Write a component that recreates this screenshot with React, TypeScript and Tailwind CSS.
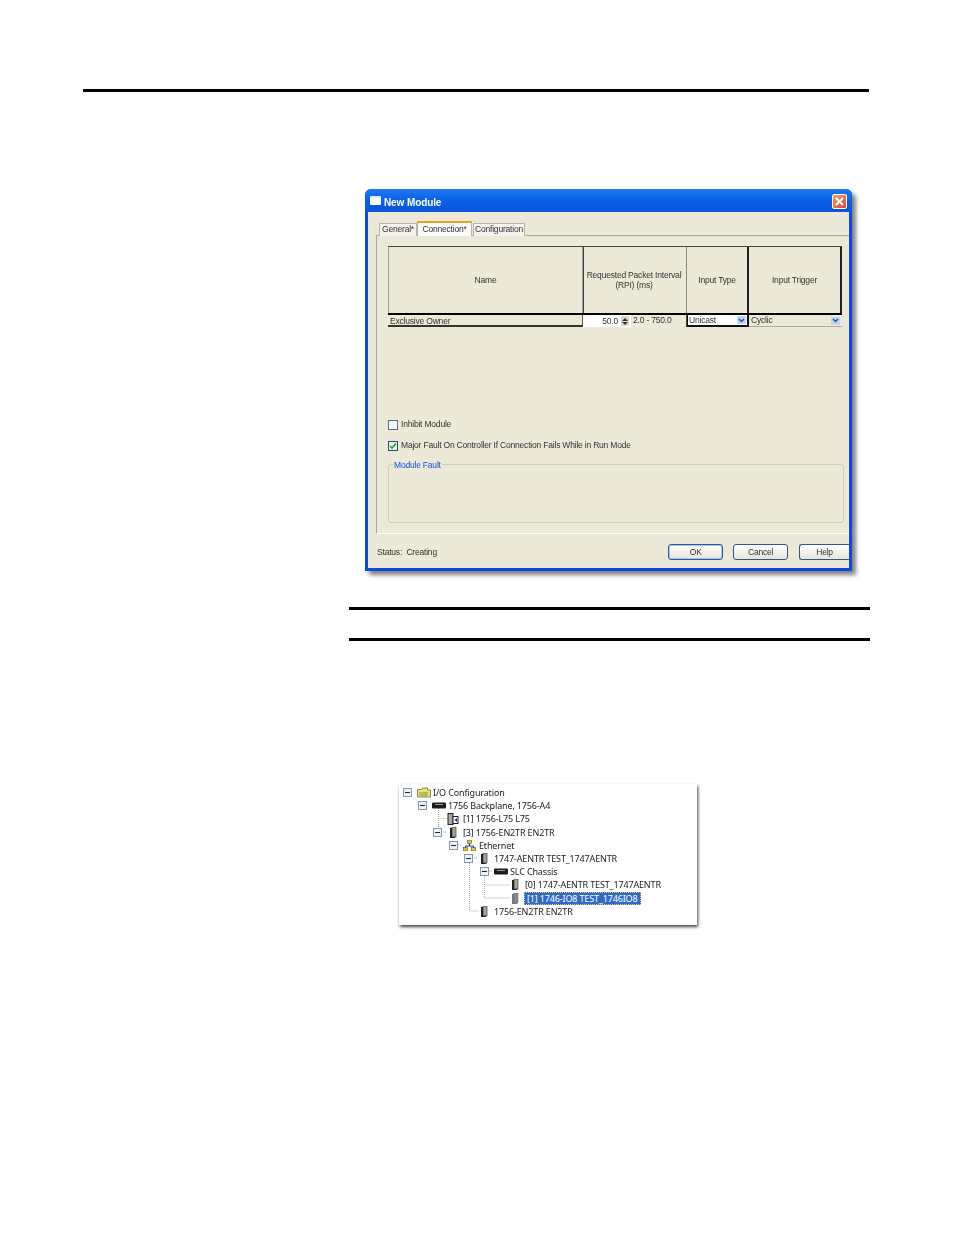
import React from "react";

const uiFont = "font-['Liberation_Sans',Arial,sans-serif]";

function Rule({ className }: { className: string }) {
    return <div className={`bg-black ${className}`} />;
}

function TitleBar() {
    return (
        <div className="h-[23px] flex items-center rounded-t-[6px] bg-gradient-to-b from-[#1f7bf0] via-[#0a5fe8] to-[#0a55dc] pl-[5px] pr-[5px]">
            <div className="w-[11px] h-[9px] bg-white rounded-[1px] border-t-2 border-[#dfe8fa]" />
            <span className="ml-[3px] mt-[3px] text-[10px] font-bold text-white tracking-[-0.1px]">New Module</span>
            <button className="ml-auto mt-[1px] w-[15px] h-[15px] rounded-[2px] bg-gradient-to-br from-[#f0a080] to-[#d84a20] border border-white flex items-center justify-center">
                <svg width="9" height="9" viewBox="0 0 9 9">
                    <path d="M1 1l7 7M8 1L1 8" stroke="#fff" strokeWidth="1.8" />
                </svg>
            </button>
        </div>
    );
}

function Tabs() {
    return (
        <div className="flex items-end h-[16px] pl-[3px] relative z-10 -mb-px text-[8.5px] tracking-[-0.2px] text-[#333]">
            <div className="h-[13px] w-[38px] pb-[1px] flex items-center justify-center bg-[#f4f3ec] border border-b-0 border-[#b5b5aa]">General*</div>
            <div className="h-[15px] w-[55px] pb-[1px] flex items-center justify-center bg-[#fbfbf9] border-x border-[#b5b5aa] border-t-2 border-t-[#e8a020]">Connection*</div>
            <div className="ml-[1px] h-[13px] w-[52px] pb-[1px] flex items-center justify-center bg-[#f4f3ec] border border-b-0 border-[#b5b5aa]">Configuration</div>
        </div>
    );
}

function ComboArrow() {
    return (
        <span className="ml-auto w-[9px] h-[8px] bg-[#c3d3f5] flex items-center justify-center">
            <svg width="7" height="5" viewBox="0 0 7 5">
                <path d="M1 1l2.500 2.500L6 1" fill="none" stroke="#2a4fa8" strokeWidth="1.500" />
            </svg>
        </span>
    );
}

function ConnectionTable() {
    return (
        <div className="w-[454px] ml-[11px] mt-[10px] text-[8.5px] tracking-[-0.2px] text-[#333]">
            <div className="flex h-[69px] border-t border-[#444] border-b-2 border-b-black text-center">
                <div className="w-[195px] border-x border-[#999] flex items-center justify-center">Name</div>
                <div className="w-[104px] border-l border-[#444] border-r border-r-[#888] flex items-center justify-center leading-[10.500px] pr-[2px]">
                    <span>Requested Packet Interval<br />(RPI) (ms)</span>
                </div>
                <div className="w-[62px] border-r-2 border-[#222] flex items-center justify-center">Input Type</div>
                <div className="w-[93px] border-r-2 border-[#222] flex items-center justify-center">Input Trigger</div>
            </div>
            <div className="flex h-[12px] items-stretch leading-[11px]">
                <div className="w-[195px] border-b-2 border-[#333] border-r border-r-[#555] pl-[2px] pt-px">Exclusive Owner</div>
                <div className="w-[48px] bg-white flex items-center justify-end pr-[2px]">
                    50.0
                    <span className="ml-[3px] w-[8px] h-[10px] bg-[#ddd9c8] flex flex-col items-center justify-center gap-[1px]">
                        <span className="w-0 h-0 border-x-[3px] border-x-transparent border-b-[3px] border-b-[#333]" />
                        <span className="w-0 h-0 border-x-[3px] border-x-transparent border-t-[3px] border-t-[#333]" />
                    </span>
                </div>
                <div className="w-[56px] pl-[2px] border-r border-[#444]">2.0 - 750.0</div>
                <div className="w-[62px] bg-white border-b-2 border-l border-r-2 border-[#111] flex items-center pr-[1px] pl-[1px] leading-[8px]">
                    Unicast
                    <ComboArrow />
                </div>
                <div className="w-[93px] flex items-center border-b border-[#aaa] pl-[2px] pr-[2px]">
                    Cyclic
                    <ComboArrow />
                </div>
            </div>
        </div>
    );
}

function CheckRow({ checked, label, className }: { checked?: boolean; label: string; className: string }) {
    return (
        <div className={`flex items-center ml-[11px] h-[11px] text-[8.5px] tracking-[-0.2px] text-[#333] ${className}`}>
            <span className={`w-[10px] h-[10px] flex items-center justify-center border ${checked ? "border-[#1c4f7c] bg-[#f0f0ea]" : "border-[#55708a] bg-[#f4f4f0]"}`}>
                {checked && (
                    <svg width="8" height="8" viewBox="0 0 8 8">
                        <path d="M1 4l2 2 4-4.500" fill="none" stroke="#21a121" strokeWidth="1.600" />
                    </svg>
                )}
            </span>
            <span className="ml-[3px]">{label}</span>
        </div>
    );
}

function Dialog() {
    return (
        <div className={`ml-[365px] mt-[97px] w-[487px] h-[382px] rounded-t-[6px] bg-[#0a4ae0] shadow-[4px_4px_4px_rgba(90,90,90,0.75)] blur-[0.3px] ${uiFont}`}>
            <TitleBar />
            <div className="mx-[3px] h-[356px] bg-[#ece9d8] pt-[8px] pl-[8px] overflow-hidden">
                <Tabs />
                <div className="w-[473px] h-[299px] border-y border-l border-[#a8a8a0] border-b-[#fdfdf8]">
                    <ConnectionTable />
                    <CheckRow label="Inhibit Module" className="mt-[92px]" />
                    <CheckRow checked label="Major Fault On Controller If Connection Fails While in Run Mode" className="mt-[10px]" />
                    <div className="relative ml-[11px] mt-[13px] w-[456px] h-[59px] border border-[#d0cfbd] rounded-[3px]">
                        <span className="absolute -top-[5px] left-[4px] px-[1px] bg-[#ece9d8] text-[8.5px] tracking-[-0.2px] leading-[10px] text-[#1450d8]">Module Fault</span>
                    </div>
                </div>
                <div className="flex items-center mt-[10px] text-[8.5px] tracking-[-0.2px] text-[#333]">
                    <span className="w-[293px] pl-[1px]">Status:&nbsp; Creating</span>
                    <button className="w-[55px] h-[16px] rounded-[3px] border border-[#2f5a96] bg-gradient-to-b from-[#ffffff] to-[#e6e4da] shadow-[inset_0_0_0_1px_#a9c4ee]">OK</button>
                    <button className="ml-[10px] w-[55px] h-[16px] rounded-[3px] border border-[#2f5a80] bg-gradient-to-b from-[#ffffff] to-[#e6e4da]">Cancel</button>
                    <button className="ml-[11px] w-[50px] h-[16px] rounded-l-[3px] border border-r-0 border-[#2f5a80] bg-gradient-to-b from-[#ffffff] to-[#e6e4da]">Help</button>
                </div>
            </div>
        </div>
    );
}

type IconKind = "folder" | "chassis" | "controller" | "module" | "network" | "grayModule";

function TreeIcon({ kind }: { kind: IconKind }) {
    if (kind === "folder") {
        return (
            <svg width="14" height="11" viewBox="0 0 14 11">
                <path d="M0.500 2.500h4l1-1.500h5v2h3v7h-13z" fill="#f2e070" stroke="#8a8a50" />
                <path d="M2 6h9M2 8h9" stroke="#6c9c50" strokeWidth="1" />
            </svg>
        );
    }
    if (kind === "chassis") {
        return (
            <svg width="14" height="7" viewBox="0 0 14 7">
                <rect x="0" y="0.500" width="14" height="6" rx="1" fill="#1c1c1c" />
                <path d="M3 2.500h8" stroke="#999" strokeWidth="1" />
            </svg>
        );
    }
    if (kind === "controller") {
        return (
            <svg width="12" height="12" viewBox="0 0 12 12">
                <rect x="1" y="0.500" width="5" height="11" fill="#aaa" stroke="#222" />
                <rect x="6" y="3.500" width="5" height="7" fill="#fff" stroke="#222" />
                <path d="M10 5L7.500 7 10 9z" fill="#1a2a90" />
            </svg>
        );
    }
    if (kind === "module" || kind === "grayModule") {
        const dark = kind === "module";
        return (
            <svg className="ml-[3px]" width="8" height="11" viewBox="0 0 8 11">
                <rect x="0" y="1" width="5" height="10" fill={dark ? "#222" : "#777"} />
                <rect x="2" y="0" width="4" height="10" fill={dark ? "#9aa89a" : "#888"} stroke={dark ? "#222" : "#777"} strokeWidth="0.600" />
            </svg>
        );
    }
    return (
        <svg width="13" height="11" viewBox="0 0 13 11">
            <path d="M6.500 3v3M2.500 8V6h8v2" fill="none" stroke="#2233aa" />
            <rect x="4.500" y="0" width="4" height="3.500" fill="#e6c820" stroke="#333" strokeWidth="0.500" />
            <rect x="0.500" y="7.500" width="4" height="3.500" fill="#e6c820" stroke="#333" strokeWidth="0.500" />
            <rect x="8.500" y="7.500" width="4" height="3.500" fill="#e6c820" stroke="#333" strokeWidth="0.500" />
        </svg>
    );
}

const treeRows: { pad: string; box: boolean; icon: IconKind; label: string; selected?: boolean }[] = [
    { pad: "pl-[4px]", box: true, icon: "folder", label: "I/O Configuration" },
    { pad: "pl-[19px]", box: true, icon: "chassis", label: "1756 Backplane, 1756-A4" },
    { pad: "pl-[34px]", box: false, icon: "controller", label: "[1] 1756-L75 L75" },
    { pad: "pl-[34px]", box: true, icon: "module", label: "[3] 1756-EN2TR EN2TR" },
    { pad: "pl-[50px]", box: true, icon: "network", label: "Ethernet" },
    { pad: "pl-[65px]", box: true, icon: "module", label: "1747-AENTR TEST_1747AENTR" },
    { pad: "pl-[81px]", box: true, icon: "chassis", label: "SLC Chassis" },
    { pad: "pl-[96px]", box: false, icon: "module", label: "[0] 1747-AENTR TEST_1747AENTR" },
    { pad: "pl-[96px]", box: false, icon: "grayModule", label: "[1] 1746-IO8 TEST_1746IO8", selected: true },
    { pad: "pl-[65px]", box: false, icon: "module", label: "1756-EN2TR EN2TR" },
];

function TreeLines() {
    return (
        <svg className="absolute inset-0" width="298" height="141" viewBox="0 0 298 141" fill="none" stroke="#a8a8a8" strokeDasharray="1 1">
            <path d="M39.500 24v19M39.500 34.500h9M44 48h4M59 61h4M70.500 79v48h9M75 74h4M85.500 92v22M85.500 101h25M85.500 114h25M90 87h4" />
        </svg>
    );
}

function IOTree() {
    return (
        <div className="relative ml-[399px] mt-[143px] w-[298px] h-[141px] bg-white pt-[2px] shadow-[1px_2px_3px_rgba(50,50,50,0.9)] text-[9px] tracking-[-0.15px] text-[#222] blur-[0.25px] font-['Noto_Sans',Arial,sans-serif]">
            <TreeLines />
            {treeRows.map((row) => (
                <div key={row.label} className={`relative flex items-center h-[13.200px] ${row.pad}`}>
                    <span className="w-[14px] shrink-0">
                        {row.box && (
                            <span className="w-[9px] h-[9px] border border-[#7f9db9] bg-[#f2f2ee] flex items-center justify-center">
                                <span className="w-[5px] h-px bg-[#223]" />
                            </span>
                        )}
                    </span>
                    <span className="w-[16px] shrink-0 flex items-center">
                        <TreeIcon kind={row.icon} />
                    </span>
                    <span className={row.selected ? "-ml-[1px] bg-[#316ac5] text-white border border-dotted border-[#e8c070] px-[2px] leading-[11px]" : "leading-[13px]"}>
                        {row.label}
                    </span>
                </div>
            ))}
        </div>
    );
}

export default function App() {
    return (
        <div className="w-[954px] h-[1235px] bg-white overflow-hidden pt-[89px]">
            <Rule className="ml-[83px] w-[786px] h-[3px]" />
            <Dialog />
            <Rule className="ml-[349px] mt-[36px] w-[521px] h-[3px]" />
            <Rule className="ml-[349px] mt-[28px] w-[521px] h-[3px]" />
            <IOTree />
        </div>
    );
}
